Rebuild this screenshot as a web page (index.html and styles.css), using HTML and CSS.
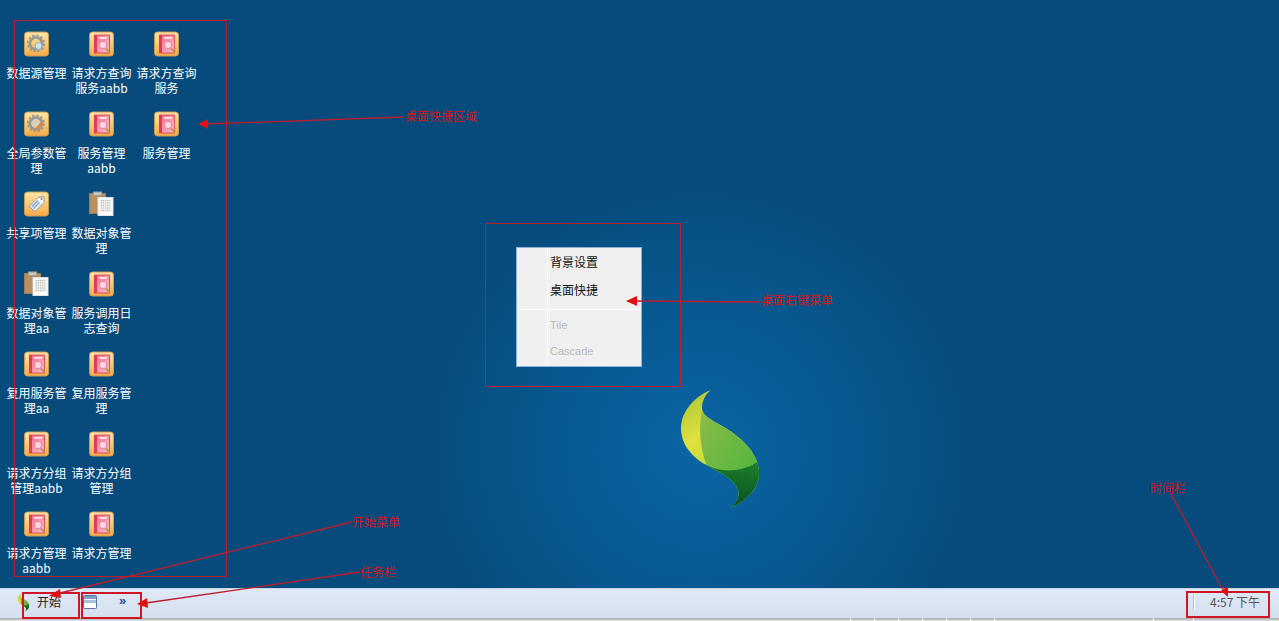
FILE: index.html
```html
<!DOCTYPE html>
<html lang="zh-CN">
<head>
    <meta charset="UTF-8">
    <title>Desktop</title>
    <link rel="stylesheet" href="styles.css">
</head>
<body>
    <svg class="defs" width="0" height="0">
        <defs>
            <linearGradient id="tile" x1="0" y1="0" x2="0" y2="1">
                <stop offset="0" stop-color="#ffe7a6"/>
                <stop offset="1" stop-color="#f8ab45"/>
            </linearGradient>
            <linearGradient id="cover" x1="0" y1="0" x2="1" y2="1">
                <stop offset="0" stop-color="#f26f8c"/>
                <stop offset="1" stop-color="#fbbccb"/>
            </linearGradient>
            <linearGradient id="leafTop" x1="0" y1="0" x2="0.6" y2="1">
                <stop offset="0" stop-color="#8fb43a"/>
                <stop offset="0.45" stop-color="#dfe23c"/>
                <stop offset="1" stop-color="#93cc40"/>
            </linearGradient>
            <linearGradient id="leafMid" x1="0" y1="0" x2="1" y2="1">
                <stop offset="0" stop-color="#8dbb48"/>
                <stop offset="1" stop-color="#30b23a"/>
            </linearGradient>
            <linearGradient id="leafLow" x1="0.6" y1="0" x2="0.4" y2="1">
                <stop offset="0" stop-color="#1c7f2c"/>
                <stop offset="1" stop-color="#04461c"/>
            </linearGradient>
            <clipPath id="leafClip">
                <path d="M152 30C100 52 64 95 63 145C62 190 95 232 140 256C185 280 228 300 236 335C238 352 230 368 212 383C262 362 298 322 297 280C298 225 250 175 190 140C150 118 128 108 126 85C125 65 135 45 152 30Z"/>
            </clipPath>

            <symbol id="leaf" viewBox="0 0 360 405">
                <g clip-path="url(#leafClip)">
                    <rect width="360" height="405" fill="url(#leafTop)"/>
                    <path d="M126 95C116 140 118 195 140 256L140 405L360 405L360 150L180 125Z" fill="url(#leafMid)"/>
                    <path d="M135 252C190 285 260 272 300 240L300 405L180 405Z" fill="url(#leafLow)"/>
                </g>
            </symbol>

            <symbol id="ico-book" viewBox="0 0 25 25">
                <rect x="0.5" y="0.5" width="24" height="24" rx="3" fill="url(#tile)" stroke="#c99a55"/>
                <rect x="5.500" y="3.500" width="15" height="18" fill="url(#cover)" stroke="#c8394f" stroke-width="0.8"/>
                <rect x="5" y="3.500" width="3" height="18" fill="#d8405a"/>
                <rect x="10" y="5.500" width="8" height="1.800" fill="#fde0e6"/>
                <circle cx="14" cy="13.500" r="3.800" fill="#fbd7e2" stroke="#ea7d98"/>
                <path d="M17 17l4 4" stroke="#a8963a" stroke-width="1.600"/>
            </symbol>

            <symbol id="ico-gear" viewBox="0 0 25 25">
                <rect x="0.5" y="0.5" width="24" height="24" rx="3" fill="url(#tile)" stroke="#c99a55"/>
                <circle cx="12" cy="12" r="6" fill="none" stroke="#9a9a92" stroke-width="2.500"/>
                <circle cx="12" cy="12" r="8" fill="none" stroke="#9a9a92" stroke-width="2" stroke-dasharray="2.500 1.700"/>
                <circle cx="14.500" cy="14.500" r="3.400" fill="#c6e8f2" stroke="#86b2c2"/>
            </symbol>

            <symbol id="ico-gear-edit" viewBox="0 0 25 25">
                <rect x="0.5" y="0.5" width="24" height="24" rx="3" fill="url(#tile)" stroke="#c99a55"/>
                <circle cx="12" cy="12" r="6" fill="#d9d2b8" stroke="#9a9a92" stroke-width="2.500"/>
                <circle cx="12" cy="12" r="8" fill="none" stroke="#9a9a92" stroke-width="2" stroke-dasharray="2.500 1.700"/>
                <path d="M12 18L18 11" stroke="#e8862a" stroke-width="2.400"/>
            </symbol>

            <symbol id="ico-tag" viewBox="0 0 25 25">
                <rect x="0.5" y="0.5" width="24" height="24" rx="3" fill="url(#tile)" stroke="#c99a55"/>
                <path d="M5 15L14 6L20 5L20 11L11 20Z" fill="#f4f4f0" stroke="#8d9aa8"/>
                <path d="M7.500 15.500L14 9M9.500 17L15.500 11" stroke="#6f9fc8" stroke-width="1.200"/>
                <circle cx="17.500" cy="7.500" r="1" fill="#a07a3c"/>
            </symbol>

            <symbol id="ico-clip" viewBox="0 0 25 25">
                <rect x="0.500" y="2" width="16" height="20" fill="#b98f62" stroke="#a07c56"/>
                <rect x="4.500" y="0.500" width="8" height="3.500" fill="#c9c9c4" stroke="#9f9f9a"/>
                <rect x="9" y="6" width="15" height="18" fill="#fff" stroke="#dde2e6"/>
                <path d="M11.500 9h10M11.500 11.500h10M11.500 14h10M11.500 16.500h10M11.500 19h10" stroke="#b6b6b2" stroke-width="1.500" stroke-dasharray="1.500 0.700"/>
            </symbol>
        </defs>
    </svg>

    <div class="desktop">
        <div class="glow"></div>

        <svg class="logo"><use href="#leaf"/></svg>

        <div class="shortcuts">
            <div class="shortcut"><svg class="icon"><use href="#ico-gear"/></svg><span>数据源管理</span></div>
            <div class="shortcut"><svg class="icon"><use href="#ico-book"/></svg><span>请求方查询服务aabb</span></div>
            <div class="shortcut"><svg class="icon"><use href="#ico-book"/></svg><span>请求方查询服务</span></div>
            <div class="shortcut"><svg class="icon"><use href="#ico-gear-edit"/></svg><span>全局参数管理</span></div>
            <div class="shortcut"><svg class="icon"><use href="#ico-book"/></svg><span>服务管理aabb</span></div>
            <div class="shortcut"><svg class="icon"><use href="#ico-book"/></svg><span>服务管理</span></div>
            <div class="shortcut"><svg class="icon"><use href="#ico-tag"/></svg><span>共享项管理</span></div>
            <div class="shortcut"><svg class="icon"><use href="#ico-clip"/></svg><span>数据对象管理</span></div>
            <div class="shortcut empty"></div>
            <div class="shortcut"><svg class="icon"><use href="#ico-clip"/></svg><span>数据对象管理aa</span></div>
            <div class="shortcut"><svg class="icon"><use href="#ico-book"/></svg><span>服务调用日志查询</span></div>
            <div class="shortcut empty"></div>
            <div class="shortcut"><svg class="icon"><use href="#ico-book"/></svg><span>复用服务管理aa</span></div>
            <div class="shortcut"><svg class="icon"><use href="#ico-book"/></svg><span>复用服务管理</span></div>
            <div class="shortcut empty"></div>
            <div class="shortcut"><svg class="icon"><use href="#ico-book"/></svg><span>请求方分组管理aabb</span></div>
            <div class="shortcut"><svg class="icon"><use href="#ico-book"/></svg><span>请求方分组管理</span></div>
            <div class="shortcut empty"></div>
            <div class="shortcut"><svg class="icon"><use href="#ico-book"/></svg><span>请求方管理aabb</span></div>
            <div class="shortcut"><svg class="icon"><use href="#ico-book"/></svg><span>请求方管理</span></div>
        </div>

        <div class="menu">
            <div class="menu-item">背景设置</div>
            <div class="menu-item">桌面快捷</div>
            <div class="menu-sep"></div>
            <div class="menu-item disabled">Tile</div>
            <div class="menu-item disabled">Cascade</div>
        </div>
    </div>

    <div class="taskbar">
        <div class="start">
            <svg class="start-icon"><use href="#leaf"/></svg>
            <span>开始</span>
        </div>
        <div class="tasks">
            <svg class="task-icon" viewBox="0 0 14 14" width="14" height="14">
                <rect x="0.500" y="0.500" width="13" height="13" rx="1" fill="#fff" stroke="#56749c"/>
                <rect x="1" y="1" width="12" height="3" fill="#7f9fca"/>
                <rect x="1" y="5" width="12" height="3" fill="#a9c0de"/>
            </svg>
            <span class="more">»</span>
        </div>
        <div class="tray">
            <span class="tray-sep"></span>
            <span class="clock">4:57 下午</span>
        </div>
    </div>
    <div class="bottom-strip">
        <span class="tick t1"></span>
        <span class="tick t2"></span>
        <span class="tick t3"></span>
        <span class="tick t4"></span>
        <span class="tick t5"></span>
        <span class="tick t6"></span>
        <span class="tick t7"></span>
        <span class="tick t8"></span>
        <span class="tick t9"></span>
    </div>

    <!-- red notes drawn over the screenshot -->
    <div class="note-box box-shortcuts"></div>
    <div class="note-box box-menu"></div>
    <div class="note-box box-start"></div>
    <div class="note-box box-tasks"></div>
    <div class="note-box box-clock"></div>

    <svg class="note-lines" width="1279" height="621">
        <g stroke="#c01c2c" stroke-width="1.300" fill="none">
            <path d="M404 117L205 124"/>
            <path d="M760 302L633 301"/>
            <path d="M352 522L56 594"/>
            <path d="M360 572L146 603"/>
            <path d="M1170 492L1223 590"/>
        </g>
        <g fill="#e00f14">
            <path d="M198 124L208 119L208 129Z"/>
            <path d="M626 301L637 296L637 306Z"/>
            <path d="M49 596L60 589L61 598Z"/>
            <path d="M137 604L147 598L148 608Z"/>
            <path d="M1228 597L1221 591L1228 586Z"/>
        </g>
    </svg>

    <span class="note-text n-shortcuts">桌面快捷区域</span>
    <span class="note-text n-menu">桌面右键菜单</span>
    <span class="note-text n-start">开始菜单</span>
    <span class="note-text n-tasks">任务栏</span>
    <span class="note-text n-clock">时间栏</span>
</body>
</html>
```

FILE: styles.css
```css
html, body {
    margin: 0;
    height: 621px;
    overflow: hidden;
}
body {
    position: relative;
    display: flex;
    flex-direction: column;
    font-family: "Noto Sans CJK SC", "Liberation Sans", sans-serif;
    font-size: 12px;
}
.defs {
    position: absolute;
}
.desktop {
    position: relative;
    height: 588px;
    flex: none;
    background-color: #064b7b;
    overflow: hidden;
}
.glow {
    position: absolute;
    left: 410px;
    top: 170px;
    width: 580px;
    height: 560px;
    background: radial-gradient(closest-side, #0a65a4 0%, #085a93 45%, rgba(6,75,123,0) 100%);
}
.logo {
    position: absolute;
    left: 660px;
    top: 380px;
    width: 120px;
    height: 135px;
}

/* shortcuts */
.shortcuts {
    position: relative;
    display: grid;
    grid-template-columns: repeat(3, 65px);
    grid-auto-rows: 80px;
    width: 195px;
    padding: 30px 0 0 4px;
}
.shortcut {
    display: flex;
    flex-direction: column;
    align-items: center;
    text-align: center;
    color: #fff;
    line-height: 15px;
}
.shortcut span {
    width: 62px;
    margin-top: 8px;
}
.icon {
    width: 25px;
    height: 26px;
    margin-top: 1px;
    flex: none;
}

/* right click menu */
.menu {
    position: absolute;
    left: 516px;
    top: 247px;
    width: 124px;
    height: 118px;
    background-color: #f0f0f0;
    border: 1px solid #8db5dc;
    background-image: linear-gradient(#fff, #fff);
    background-size: 1px 100%;
    background-position: 30px 0;
    background-repeat: no-repeat;
}
.menu-item {
    height: 28px;
    padding-left: 33px;
    line-height: 28px;
    color: #111;
}
.menu-sep {
    height: 1px;
    margin: 5px 2px 2px 3px;
    background-color: #fff;
}
.menu-item.disabled {
    height: 26px;
    line-height: 26px;
    color: #b8b8b8;
    font-family: "Liberation Sans", sans-serif;
    font-size: 11px;
}

/* taskbar */
.taskbar {
    display: flex;
    align-items: center;
    height: 30px;
    flex: none;
    padding-bottom: 4px;
    background: linear-gradient(#dfe8f4, #d5e0f0);
    border-top: 1px solid #c6d4e6;
    box-sizing: border-box;
    color: #222;
}
.start {
    display: flex;
    align-items: center;
    gap: 4px;
    width: 67px;
    padding-left: 14px;
}
.start-icon {
    width: 19px;
    height: 20px;
}
.tasks {
    display: flex;
    align-items: center;
    gap: 22px;
    margin-left: 2px;
}
.more {
    color: #1f4b8c;
    font-family: "Liberation Sans", sans-serif;
    font-size: 13px;
    font-weight: bold;
    margin-top: -3px;
}
.tray {
    display: flex;
    align-items: center;
    margin-left: auto;
    padding-right: 19px;
}
.tray-sep {
    width: 1px;
    height: 15px;
    margin-right: 16px;
    background-color: #a9c0de;
    box-shadow: 1px 0 0 #fff;
}
.clock {
    color: #555;
}
.bottom-strip {
    position: relative;
    flex: none;
    height: 3px;
    background: linear-gradient(#a4a4a4, #e6e6e6);
}
.tick {
    position: absolute;
    top: 0;
    width: 1px;
    height: 3px;
    background-color: #fff;
}
.t1 { left: 850px; }
.t2 { left: 874px; }
.t3 { left: 898px; }
.t4 { left: 922px; }
.t5 { left: 946px; }
.t6 { left: 970px; }
.t7 { left: 994px; }
.t8 { left: 1153px; }
.t9 { left: 1193px; }

/* annotations */
.note-box {
    position: absolute;
    border: 1px solid #c01c2c;
    box-sizing: border-box;
}
.box-shortcuts { left: 14px; top: 20px; width: 213px; height: 557px; }
.box-menu { left: 485px; top: 223px; width: 196px; height: 164px; }
.box-start { left: 22px; top: 592px; width: 58px; height: 27px; border-width: 2px; border-color: #d01525; }
.box-tasks { left: 81px; top: 592px; width: 61px; height: 27px; border-width: 2px; border-color: #d01525; }
.box-clock { left: 1186px; top: 591px; width: 84px; height: 27px; border-width: 2px; border-color: #d01525; }
.note-lines {
    position: absolute;
    left: 0;
    top: 0;
}
.note-text {
    position: absolute;
    color: #d8141c;
    line-height: 14px;
}
.n-shortcuts { left: 405px; top: 109px; }
.n-menu { left: 761px; top: 293px; }
.n-start { left: 352px; top: 515px; }
.n-tasks { left: 360px; top: 565px; }
.n-clock { left: 1150px; top: 481px; }
```
